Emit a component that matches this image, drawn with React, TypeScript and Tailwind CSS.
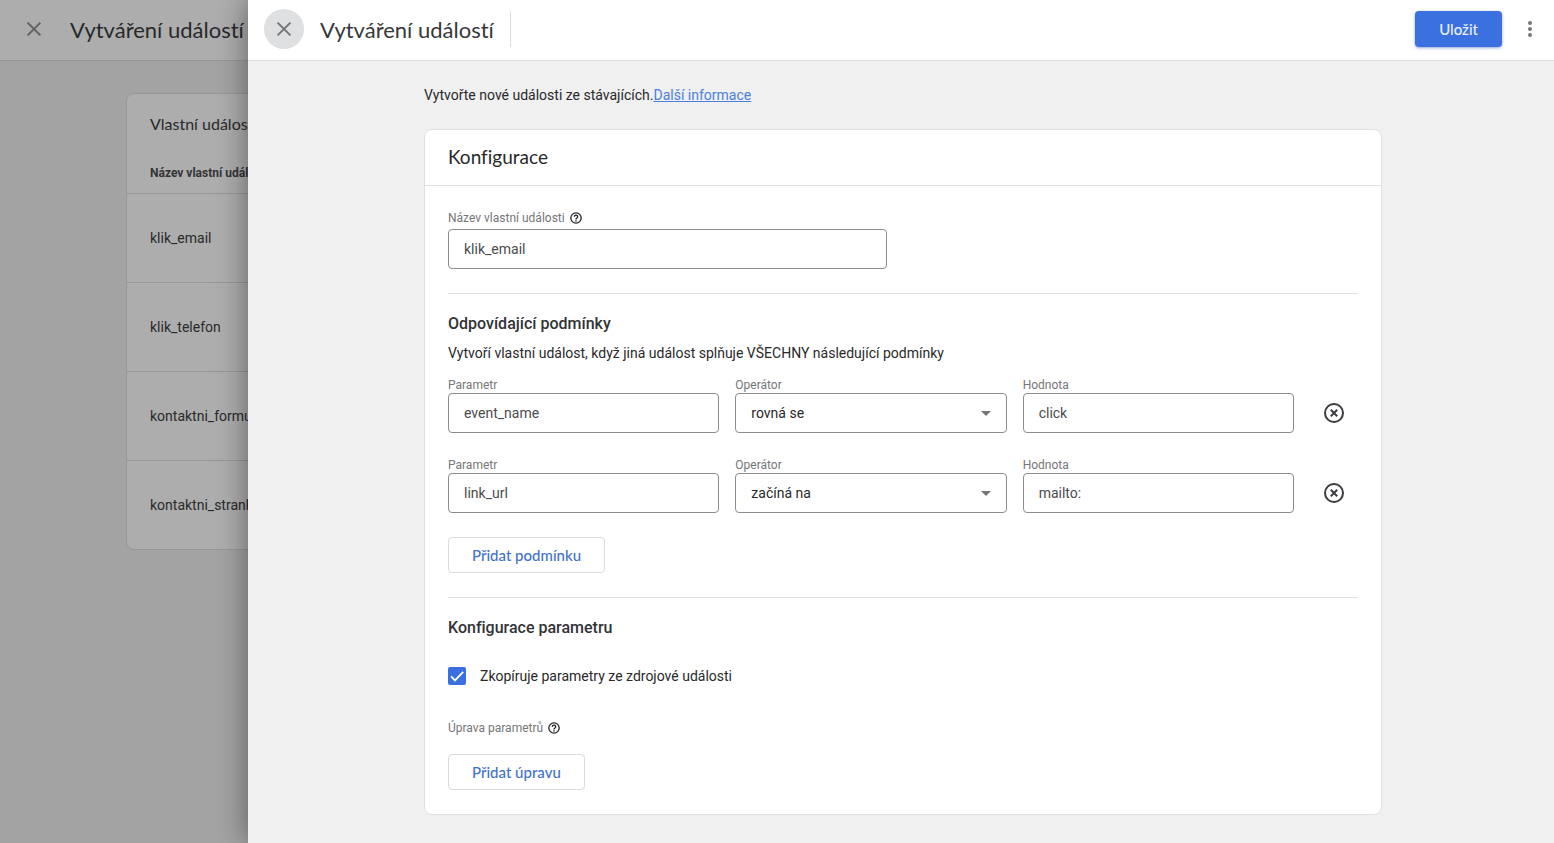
import { useState } from 'react';

interface Condition {
  id: number;
  param: string;
  operator: string;
  value: string;
}

const OPERATORS = ['rovná se', 'obsahuje', 'začíná na', 'končí na', 'je větší než', 'je menší než'];

const EVENTS = ['klik_email', 'klik_telefon', 'kontaktni_formular', 'kontaktni_stranka'];

function CloseIcon() {
  return (
    <svg viewBox="0 0 24 24" className="h-6 w-6" fill="none" stroke="currentColor" strokeWidth="2" aria-hidden="true">
      <path d="M5.6 5.6l12.8 12.8M18.4 5.6L5.6 18.4" />
    </svg>
  );
}

function HelpIcon() {
  return (
    <svg viewBox="0 0 24 24" className="h-3.5 w-3.5 text-[#202124]" fill="currentColor" aria-hidden="true">
      <path d="M12 2a10 10 0 1 0 0 20 10 10 0 0 0 0-20zm0 17.8a7.8 7.8 0 1 1 0-15.6 7.8 7.8 0 0 1 0 15.6z" />
      <path d="M10.8 15.8h2.4v2.3h-2.4zM12 6a4 4 0 0 0-4 4h2.3a1.7 1.7 0 1 1 3.4 0c0 1.8-2.9 1.7-2.9 4.7h2.4c0-2 2.8-2.3 2.8-4.7a4 4 0 0 0-4-4z" />
    </svg>
  );
}

function RemoveIcon() {
  return (
    <svg viewBox="0 0 24 24" className="h-6 w-6" fill="none" stroke="currentColor" strokeWidth="2" aria-hidden="true">
      <circle cx="12" cy="12" r="9" />
      <path d="M8.8 8.8l6.4 6.4M15.2 8.8l-6.4 6.4" />
    </svg>
  );
}

const labelClass = 'text-xs leading-4 text-[#757679]';
const inputClass = 'h-10 w-full rounded border border-[#8a8c8f] bg-white px-[15px] text-sm text-[#4a4b4e] outline-none focus:border-[#3b6fe0]';
const outlineButton = 'h-9 rounded border border-[#dadce0] bg-white px-[23px] font-[Lato,sans-serif] text-[15px] font-medium text-[#3f72cc] hover:bg-[#f6f9fe]';

export default function App() {
  const [name, setName] = useState('klik_email');
  const [copyParams, setCopyParams] = useState(true);
  const [conditions, setConditions] = useState<Condition[]>([
    { id: 1, param: 'event_name', operator: 'rovná se', value: 'click' },
    { id: 2, param: 'link_url', operator: 'začíná na', value: 'mailto:' },
  ]);

  const update = (id: number, patch: Partial<Condition>) => {
    setConditions(conditions.map((c) => (c.id === id ? { ...c, ...patch } : c)));
  };

  const addCondition = () => {
    setConditions([...conditions, { id: Date.now(), param: '', operator: 'rovná se', value: '' }]);
  };

  return (
    <div className="relative min-h-screen overflow-hidden bg-[#a3a3a3] font-[Roboto,sans-serif] text-[#28292b] [font-variant-ligatures:none]">
      {/* Dimmed list page */}
      <div aria-hidden="true">
        <div className="flex h-[61px] items-center gap-6 border-b border-[#979797] bg-[#adadad] pb-0.5 pl-[22px]">
          <span className="text-[#606163]"><CloseIcon /></span>
          <span className="font-[Lato,sans-serif] text-[22px]">Vytváření událostí</span>
        </div>
        <div className="mt-8 ml-[126px] rounded-lg border border-[#979797] bg-[#adadad]">
          <h2 className="px-[23px] pt-[18px] font-[Lato,sans-serif] text-base leading-6">Vlastní události</h2>
          <table className="mt-6 w-full text-left">
            <thead>
              <tr className="h-[33px] border-b border-[#979797]">
                <th className="px-[23px] pb-1.5 text-xs font-bold text-[#333436]">Název vlastní události</th>
              </tr>
            </thead>
            <tbody>
              {EVENTS.map((e) => (
                <tr key={e} className="h-[89px] border-b border-[#979797] last:border-b-0">
                  <td className="px-[23px] text-sm">{e}</td>
                </tr>
              ))}
            </tbody>
          </table>
        </div>
      </div>

      {/* Drawer */}
      <div role="dialog" aria-label="Vytváření událostí" className="absolute inset-y-0 right-0 left-[248px] flex flex-col bg-[#f0f0f1] shadow-[0_0_28px_rgba(0,0,0,0.45)]">
        <header className="flex h-[61px] shrink-0 items-center border-b border-[#dcdddf] bg-white pr-3 pb-0.5 pl-4">
          <button type="button" aria-label="Zavřít" className="flex h-10 w-10 items-center justify-center rounded-full bg-[#dee0e1] text-[#757678]">
            <CloseIcon />
          </button>
          <h1 className="ml-4 flex h-9 items-center border-r border-[#dcdddf] pr-4 font-[Lato,sans-serif] text-[22px] text-[#37383a]">Vytváření událostí</h1>
          <button type="button" className="ml-auto h-9 rounded bg-[#3b70e0] px-6 font-[Lato,sans-serif] text-[15px] font-medium text-[#eaf1ff] shadow-[0_1px_3px_rgba(40,80,180,0.5)]">Uložit</button>
          <button type="button" aria-label="Další možnosti" className="ml-4 flex h-9 w-6 items-center justify-center text-[#757678]">
            <svg viewBox="0 0 24 24" className="h-6 w-6" fill="currentColor" aria-hidden="true">
              <circle cx="12" cy="6" r="2" />
              <circle cx="12" cy="12" r="2" />
              <circle cx="12" cy="18" r="2" />
            </svg>
          </button>
        </header>

        <main className="min-h-0 flex-1 overflow-hidden pt-6 pl-1">
          <div className="mx-auto max-w-[958px]">
            <p className="text-sm leading-5">
              Vytvořte nové události ze stávajících.<a href="#info" className="text-[#4a7fdd] underline">Další informace</a>
            </p>

            <section className="mt-6 rounded-lg border border-[#dfe0e2] bg-white">
              <h2 className="border-b border-[#dfe0e2] px-[23px] pt-[15px] pb-4 font-[Lato,sans-serif] text-[19px] leading-6">Konfigurace</h2>

              <div className="px-[23px] py-6">
                <div className="flex items-center gap-1">
                  <label htmlFor="event-name" className={labelClass}>Název vlastní události</label>
                  <HelpIcon />
                </div>
                <input id="event-name" value={name} onChange={(e) => setName(e.target.value)} className={`${inputClass} mt-[3px] block max-w-[439px]`} />

                <hr className="mt-6 mb-5 border-[#dfe0e2]" />

                <h3 className="text-base leading-5 font-medium text-[#323336]">Odpovídající podmínky</h3>
                <p className="mt-[9px] text-sm leading-5">Vytvoří vlastní událost, když jiná událost splňuje VŠECHNY následující podmínky</p>

                <div className="mt-3.5 flex flex-col gap-6">
                  {conditions.map((c) => (
                    <div key={c.id} className="flex items-end gap-4">
                      <div className="min-w-0 flex-1">
                        <label htmlFor={`param-${c.id}`} className={`${labelClass} block`}>Parametr</label>
                        <input id={`param-${c.id}`} value={c.param} onChange={(e) => update(c.id, { param: e.target.value })} className={inputClass} />
                      </div>
                      <div className="min-w-0 flex-1">
                        <label htmlFor={`operator-${c.id}`} className={`${labelClass} block`}>Operátor</label>
                        <div className="relative">
                          <select id={`operator-${c.id}`} value={c.operator} onChange={(e) => update(c.id, { operator: e.target.value })} className={`${inputClass} appearance-none text-[#28292b]`}>
                            {OPERATORS.map((o) => <option key={o}>{o}</option>)}
                          </select>
                          <svg viewBox="0 0 10 5" className="pointer-events-none absolute top-[18px] right-4 h-[5px] w-2.5 fill-[#757679]" aria-hidden="true">
                            <path d="M0 0h10L5 5z" />
                          </svg>
                        </div>
                      </div>
                      <div className="min-w-0 flex-1">
                        <label htmlFor={`value-${c.id}`} className={`${labelClass} block`}>Hodnota</label>
                        <input id={`value-${c.id}`} value={c.value} onChange={(e) => update(c.id, { value: e.target.value })} className={inputClass} />
                      </div>
                      <button type="button" aria-label="Odebrat podmínku" onClick={() => setConditions(conditions.filter((x) => x.id !== c.id))} className="flex h-10 w-12 items-center justify-center text-[#3c3d40]">
                        <RemoveIcon />
                      </button>
                    </div>
                  ))}
                </div>

                <button type="button" onClick={addCondition} className={`${outlineButton} mt-6`}>Přidat podmínku</button>

                <hr className="mt-6 mb-5 border-[#dfe0e2]" />

                <h3 className="text-base leading-5 font-medium text-[#323336]">Konfigurace parametru</h3>

                <label className="mt-7 flex items-center gap-3.5 text-sm leading-5">
                  <span className="relative h-[18px] w-[18px]">
                    <input type="checkbox" checked={copyParams} onChange={(e) => setCopyParams(e.target.checked)} className="peer block h-[18px] w-[18px] appearance-none rounded-xs border-2 border-[#757679] checked:border-[#3b6fe0] checked:bg-[#3b6fe0]" />
                    <svg viewBox="0 0 18 18" className="pointer-events-none absolute inset-0 hidden h-[18px] w-[18px] peer-checked:block" fill="none" stroke="white" strokeWidth="1.8" aria-hidden="true">
                      <path d="M3 9.4l4 4L15.2 4.8" />
                    </svg>
                  </span>
                  Zkopíruje parametry ze zdrojové události
                </label>

                <div className="mt-[34px] flex items-center gap-1">
                  <span className={labelClass}>Úprava parametrů</span>
                  <HelpIcon />
                </div>
                <button type="button" className={`${outlineButton} mt-[18px] block`}>Přidat úpravu</button>
              </div>
            </section>
          </div>
        </main>
      </div>
    </div>
  );
}
